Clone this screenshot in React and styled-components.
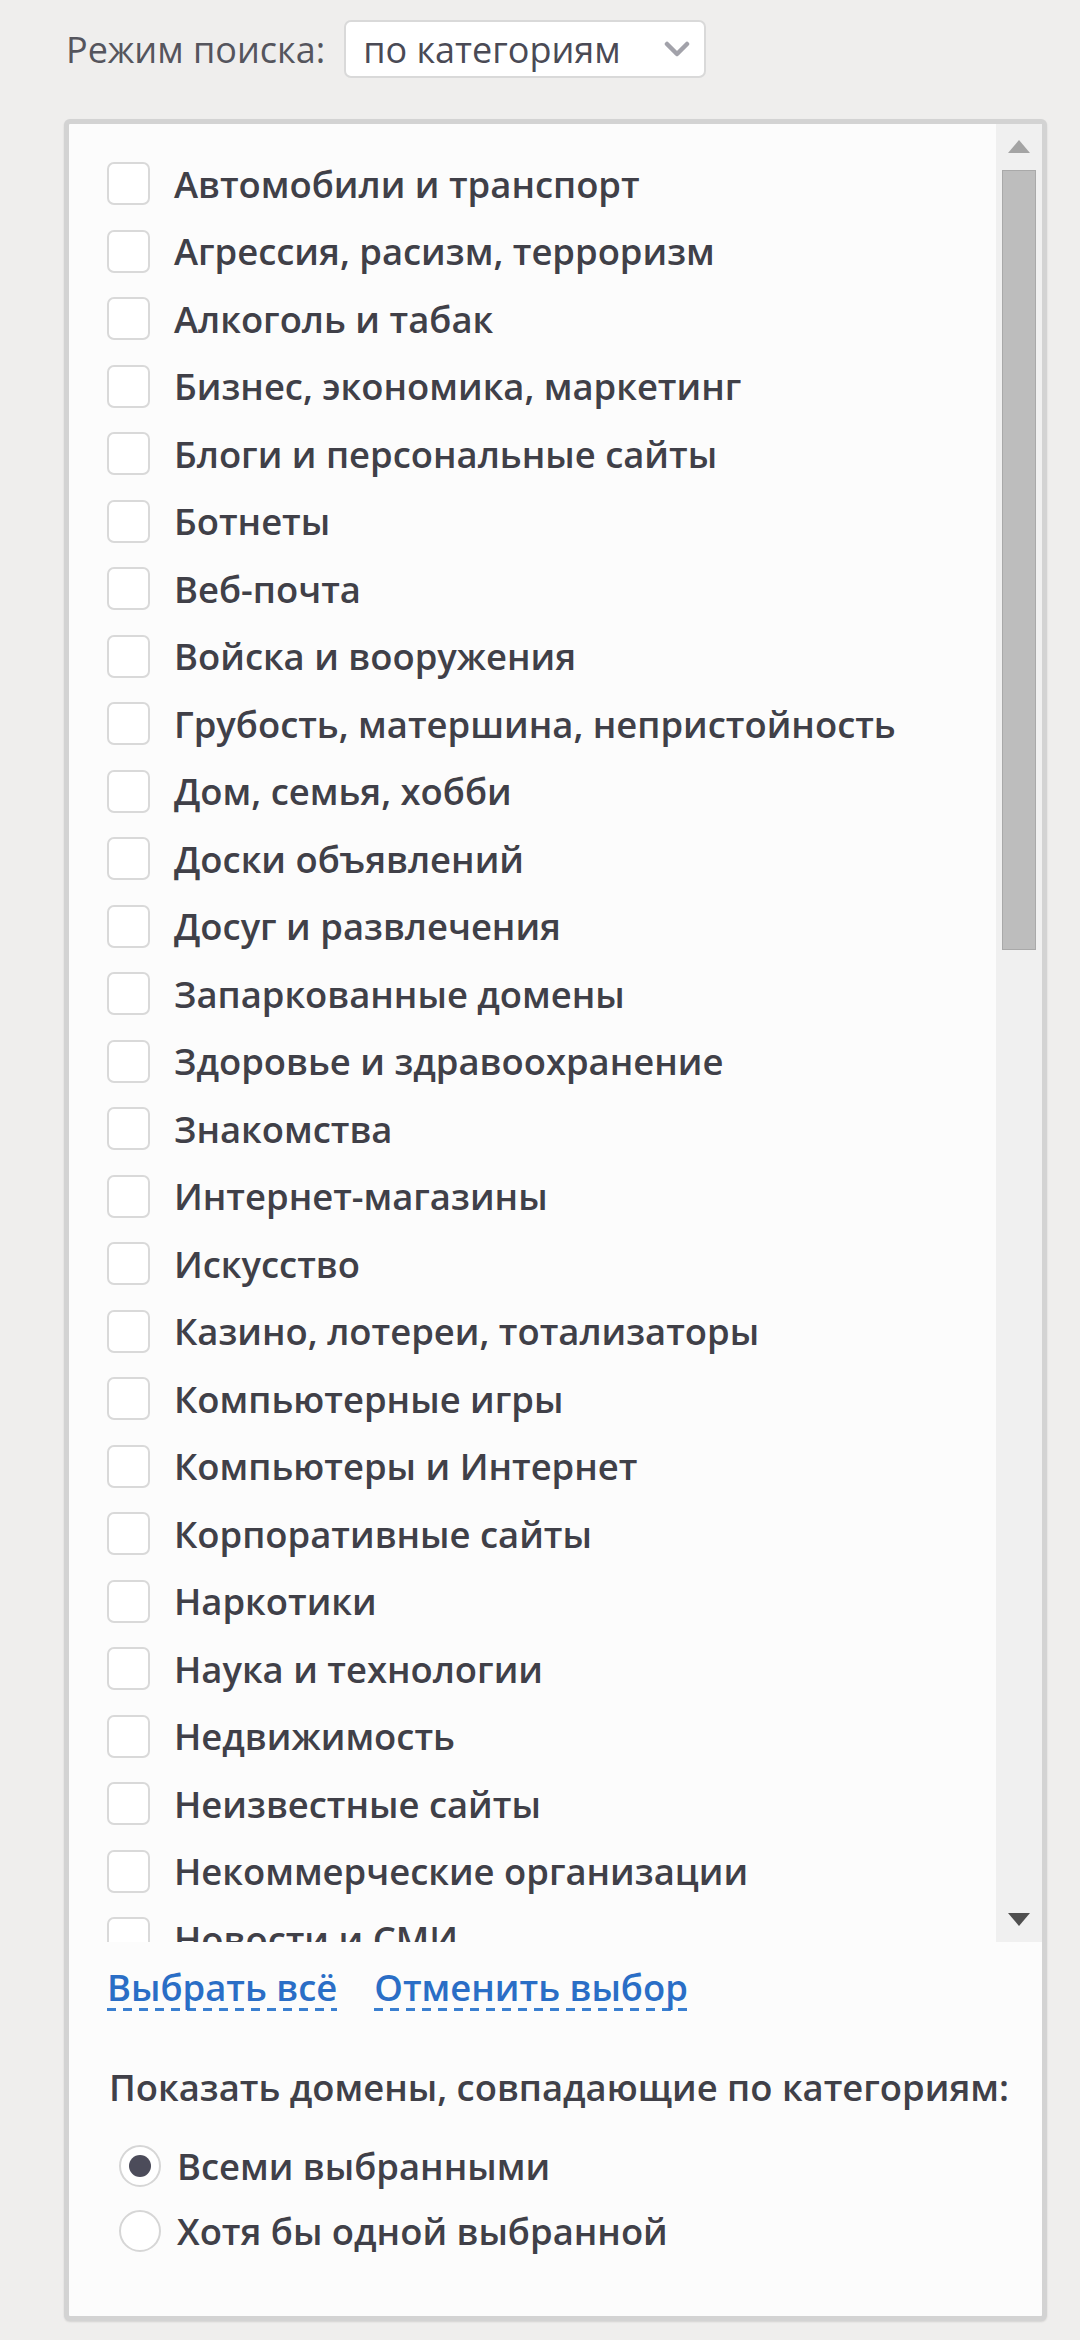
import React from "react";
import styled, { createGlobalStyle } from "styled-components";

const Global = createGlobalStyle`
  html, body { margin: 0; padding: 0; background: #efeeed; }
  body { font-family: "Open Sans", "Noto Sans", sans-serif; }
  #root { width: 1080px; }
`;

const Page = styled.div`
  width: 1080px;
  min-height: 2340px;
  box-sizing: border-box;
  padding-top: 20px;
  background: #efeeed;
`;

const TopRow = styled.div`
  display: flex;
  align-items: center;
  height: 58px;
  padding-left: 66px;
  gap: 19px;
`;

const Label = styled.span`
  font-size: 36px;
  color: #55555d;
  font-weight: 400;
`;

const Select = styled.div`
  box-sizing: border-box;
  width: 362px;
  height: 58px;
  background: #fff;
  border: 2px solid #d9d9d9;
  border-radius: 7px;
  display: flex;
  align-items: center;
  justify-content: space-between;
  padding: 0 14px 0 17px;
  font-size: 36px;
  color: #4a4a55;
`;

const Panel = styled.div`
  box-sizing: border-box;
  margin: 41px 0 0 64px;
  width: 983px;
  background: #fcfcfc;
  border: 5px solid #d3d3d3;
  border-radius: 6px;
  box-shadow: 0 1px 2px rgba(0, 0, 0, 0.12);
  padding-bottom: 53px;
`;

const ScrollBox = styled.div`
  display: flex;
  height: 1818px;
`;

const ListView = styled.div`
  flex: 1;
  overflow: hidden;
  padding-top: 26px;
`;

const Row = styled.label`
  display: flex;
  align-items: center;
  height: 67.5px;
  padding-left: 38px;
  gap: 24px;
  font-size: 36.4px;
  font-weight: 600;
  color: #404048;
  white-space: nowrap;
`;

const Box = styled.span`
  box-sizing: border-box;
  flex: none;
  width: 43px;
  height: 43px;
  background: #fff;
  border: 2px solid #d9d9d9;
  border-radius: 7px;
`;

const Track = styled.div`
  flex: none;
  width: 46px;
  background: #f0f0f0;
  display: flex;
  flex-direction: column;
  align-items: center;
`;

const ArrowBtn = styled.div`
  height: 45px;
  width: 100%;
  display: flex;
  align-items: center;
  justify-content: center;
`;

const Thumb = styled.div`
  box-sizing: border-box;
  width: 34px;
  height: 780px;
  margin-top: 1px;
  background: #bdbdbd;
  border: 1px solid #a9a9a9;
`;

const Spacer = styled.div`
  flex: 1;
`;

const Links = styled.div`
  display: flex;
  gap: 37px;
  padding: 21px 0 0 38px;
`;

const Link = styled.a`
  font-size: 36.4px;
  font-weight: 600;
  line-height: 48px;
  color: #2a6ec6;
  text-decoration: none;
  background-image: linear-gradient(to right, #3a7fd0 58%, transparent 58%);
  background-size: 16px 3px;
  background-repeat: repeat-x;
  background-position: 0 100%;
`;

const Caption = styled.div`
  margin-top: 52px;
  padding-left: 40px;
  font-size: 36.4px;
  font-weight: 600;
  line-height: 48px;
  color: #404048;
`;

const Radios = styled.div`
  margin-top: 22px;
  padding-left: 50px;
`;

const RadioRow = styled.label`
  display: flex;
  align-items: center;
  height: 65px;
  gap: 16px;
  font-size: 36.4px;
  font-weight: 600;
  color: #404048;
`;

const Radio = styled.span`
  box-sizing: border-box;
  flex: none;
  width: 42px;
  height: 42px;
  border-radius: 50%;
  background: #fff;
  border: 2px solid #d6d6d6;
  display: flex;
  align-items: center;
  justify-content: center;
  &::after {
    content: "";
    display: ${(p) => (p.$on ? "block" : "none")};
    width: 22px;
    height: 22px;
    border-radius: 50%;
    background: #4c4c5a;
  }
`;

const categories = [
  "Автомобили и транспорт",
  "Агрессия, расизм, терроризм",
  "Алкоголь и табак",
  "Бизнес, экономика, маркетинг",
  "Блоги и персональные сайты",
  "Ботнеты",
  "Веб-почта",
  "Войска и вооружения",
  "Грубость, матершина, непристойность",
  "Дом, семья, хобби",
  "Доски объявлений",
  "Досуг и развлечения",
  "Запаркованные домены",
  "Здоровье и здравоохранение",
  "Знакомства",
  "Интернет-магазины",
  "Искусство",
  "Казино, лотереи, тотализаторы",
  "Компьютерные игры",
  "Компьютеры и Интернет",
  "Корпоративные сайты",
  "Наркотики",
  "Наука и технологии",
  "Недвижимость",
  "Неизвестные сайты",
  "Некоммерческие организации",
  "Новости и СМИ",
  "Образование",
  "Общество и политика",
  "Онлайн-казино",
];

export default function App() {
  return (
    <Page>
      <Global />
      <TopRow>
        <Label>Режим поиска:</Label>
        <Select>
          <span>по категориям</span>
          <svg width="26" height="18" viewBox="0 0 26 18">
            <path d="M3 4 L13 14 L23 4" fill="none" stroke="#a2a2aa" strokeWidth="4.5" strokeLinecap="round" strokeLinejoin="round" />
          </svg>
        </Select>
      </TopRow>
      <Panel>
        <ScrollBox>
          <ListView>
            {categories.map((c) => (
              <Row key={c}>
                <Box />
                {c}
              </Row>
            ))}
          </ListView>
          <Track>
            <ArrowBtn>
              <svg width="22" height="13" viewBox="0 0 22 13">
                <path d="M11 0 L22 13 L0 13 Z" fill="#a4a4a4" />
              </svg>
            </ArrowBtn>
            <Thumb />
            <Spacer />
            <ArrowBtn>
              <svg width="22" height="13" viewBox="0 0 22 13">
                <path d="M0 0 L22 0 L11 13 Z" fill="#4f4f4f" />
              </svg>
            </ArrowBtn>
          </Track>
        </ScrollBox>
        <Links>
          <Link>Выбрать всё</Link>
          <Link>Отменить выбор</Link>
        </Links>
        <Caption>Показать домены, совпадающие по категориям:</Caption>
        <Radios>
          <RadioRow>
            <Radio $on />
            Всеми выбранными
          </RadioRow>
          <RadioRow>
            <Radio />
            Хотя бы одной выбранной
          </RadioRow>
        </Radios>
      </Panel>
    </Page>
  );
}
